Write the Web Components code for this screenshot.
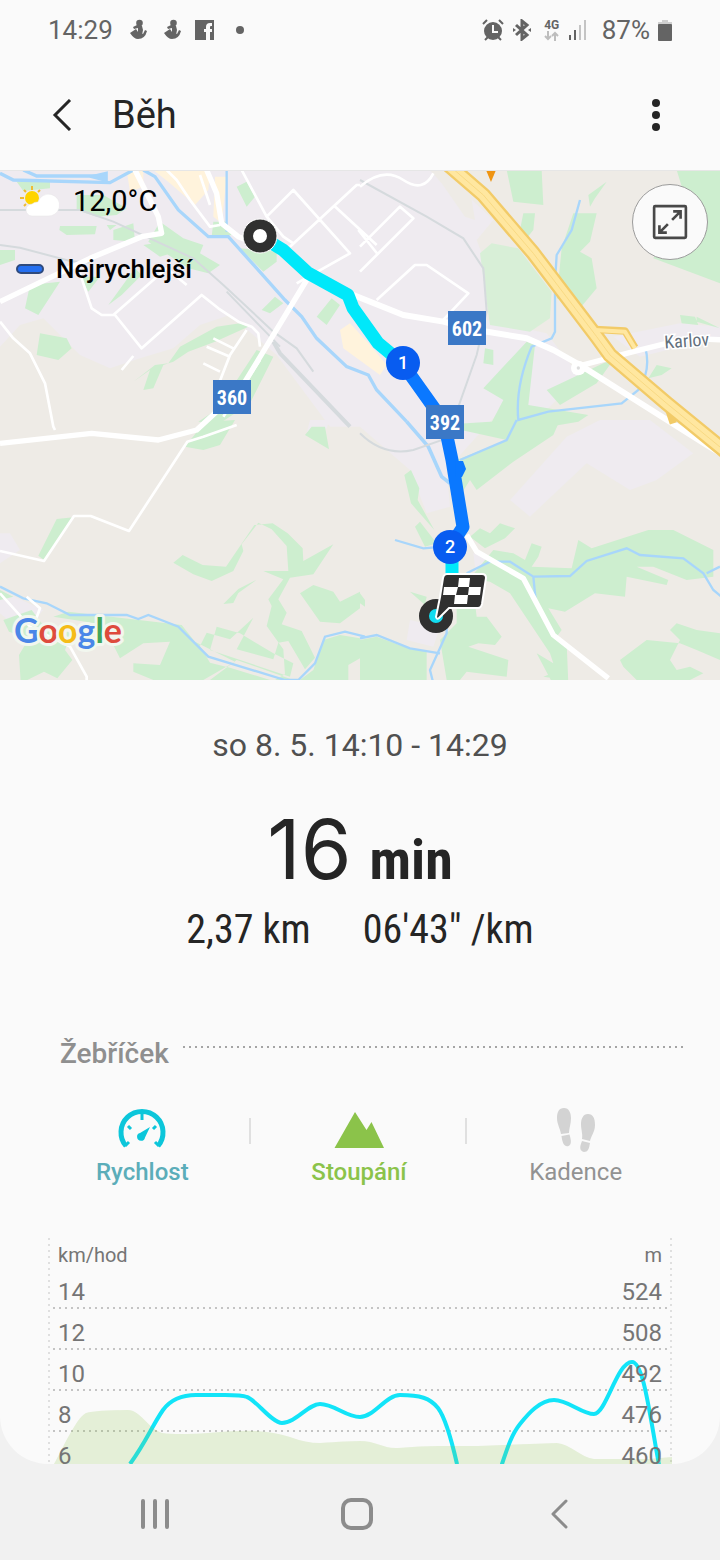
<!DOCTYPE html>
<html lang="cs">
<head>
<meta charset="utf-8">
<meta name="viewport" content="width=device-width, initial-scale=1">
<title>Běh</title>
<style>
  body { margin: 0; background: #f1f1f1; color: #252525; font-family: Roboto, "Noto Sans", sans-serif; }
</style>
</head>
<body>
<run-app></run-app>

<template id="run-app">
  <style>
    :host { display: flex; flex-direction: column; height: 100vh; }
    main { flex: 1; min-height: 0; overflow: hidden; background: #fafafa; border-radius: 0 0 48px 48px; }
  </style>
  <main>
    <status-bar></status-bar>
    <app-bar>Běh</app-bar>
    <route-map></route-map>
    <run-summary>
      <span slot="date">so 8. 5. 14:10 - 14:29</span>
      <span slot="value">16</span>
      <span slot="unit">min</span>
      <span slot="distance">2,37 km</span>
      <span slot="pace">06'43" /km</span>
    </run-summary>
    <section-heading>Žebříček</section-heading>
    <metric-tabs>
      <metric-tab style="--tone:#5badb9" strong>
        <svg slot="icon" width="52" height="48" viewBox="0 0 52 48">
          <g fill="none" stroke="#0cc6da" stroke-width="5">
            <path d="M10 40A21 21 0 1 1 42 40"/>
            <path d="M26 7v7M12 20l3 3M40 20l-3 3M9 40l4-4M43 40l-4-4" stroke-width="3"/>
          </g>
          <path d="M34 21L29 31.500A4 4 0 1 1 24 27Z" fill="#0cc6da"/>
        </svg>Rychlost
      </metric-tab>
      <metric-tab style="--tone:#8bc34a" strong>
        <svg slot="icon" width="52" height="48" viewBox="0 0 52 48"><path d="M1.500 42L22 6l11.500 18 5-8L51 42Z" fill="#8bc34a"/></svg>Stoupání
      </metric-tab>
      <metric-tab style="--tone:#929292">
        <svg slot="icon" width="52" height="48" viewBox="0 0 52 48" fill="#d3d3d3">
          <path d="M14 2c5 0 7 5 7 10 0 6-2 10-2 15l-8 1C10 22 7 18 7 12S9 2 14 2ZM11.500 30l8-1.500C21 34 22 38 18.500 40c-4 1-6-2-7-10Z"/>
          <path d="M38 8c-5 0-7 5-7 10 0 6 2 10 1 15l8 2c1-5 5-9 5-16S43 8 38 8ZM32 35l8 2c-1 6-2 9-6 9-4-1-5-4-2-11Z"/>
        </svg>Kadence
      </metric-tab>
    </metric-tabs>
    <speed-chart></speed-chart>
  </main>
  <nav-bar></nav-bar>
</template>

<template id="status-bar">
  <style>
    :host { display: flex; align-items: center; height: 60px; padding: 0 48px; color: #646464; font-size: 26px; line-height: 30px; }
    .left, .right { display: flex; align-items: center; }
    .left { flex: 1; gap: 14px; }
    .right { gap: 8px; }
    svg { display: block; fill: #646464; }
    .net { display: flex; flex-direction: column; align-items: center; font-size: 12px; font-weight: 700; line-height: 12px; margin: 0 0 0 4px; }
    .sig { margin-right: 6px; }
  </style>
  <div class="left">
    <span>14:29</span>
    <svg width="20" height="22" viewBox="-3 0 20 22"><circle cx="9.500" cy="4" r="3.300"/><path d="M3 8L9 5l3 2 1 4-1 5H8V9L4 10Z"/><path d="M0 14L6 10l2 3 5 2 2-4 2 1Q15 20 8 20 4 20 0 14Z"/></svg>
    <svg width="20" height="22" viewBox="-3 0 20 22"><circle cx="9.500" cy="4" r="3.300"/><path d="M3 8L9 5l3 2 1 4-1 5H8V9L4 10Z"/><path d="M0 14L6 10l2 3 5 2 2-4 2 1Q15 20 8 20 4 20 0 14Z"/></svg>
    <svg width="19" height="20" viewBox="0 0 19 20"><path fill-rule="evenodd" d="M0 0h19v20h-4v-8h2V9h-2V7q0-1 1-1h1V3h-2q-4 0-4 4v2H9v3h2v8H0Z"/></svg>
    <svg width="24" height="10" viewBox="0 0 24 10"><circle cx="12" cy="5" r="4"/></svg>
  </div>
  <div class="right">
    <svg width="22" height="22" viewBox="0 0 22 22"><circle cx="11" cy="12" r="9"/><path d="M1 5l4-4M21 5l-4-4M3 21l3-3M19 21l-3-3" stroke="#646464" stroke-width="2"/><path d="M11 6v7h5" fill="none" stroke="#fafafa" stroke-width="2"/></svg>
    <svg width="20" height="22" viewBox="0 0 20 22"><path d="M4 6l11 10-5 4V2l5 4L4 16" fill="none" stroke="#646464" stroke-width="3"/><path d="M1 9l3 2-3 2zM19 9l-3 2 3 2z"/></svg>
    <div class="net">4G<svg width="16" height="10" viewBox="0 0 16 10"><path d="M4 0v8M1 5l3 3 3-3M11 10V2M8 5l3-3 3 3" fill="none" stroke="#bdbdbd" stroke-width="2"/></svg></div>
    <svg class="sig" width="20" height="20" viewBox="0 0 20 20"><path d="M1 15h2v5H1zM6 10h2v10H6z"/><path d="M11 5h2v15h-2zM16 0h2v20h-2z" fill="#c4c4c4"/></svg>
    <span>87%</span>
    <svg width="14" height="21" viewBox="0 0 14 21"><path d="M4 0h6v2h4v4H0V2h4z" fill="#d0d0d0"/><rect y="4" width="14" height="17" rx="1"/></svg>
  </div>
</template>

<template id="app-bar">
  <style>
    :host { display: flex; align-items: center; height: 111px; padding: 0 48px 0 38px; box-sizing: border-box; border-bottom: 1px solid #e6e6e6; }
    button { width: 48px; height: 48px; padding: 0; border: 0; background: none; display: grid; place-items: center; }
    h1 { flex: 1; margin: 0 0 0 26px; font-size: 38px; line-height: 48px; font-weight: 400; }
    button:last-child { width: 32px; }
  </style>
  <button aria-label="Zpět"><svg width="22" height="32" viewBox="0 0 22 32"><path d="M19 1L4 16l15 15" fill="none" stroke="#252525" stroke-width="3"/></svg></button>
  <h1><slot></slot></h1>
  <button aria-label="Další možnosti"><svg width="8" height="32" viewBox="0 0 8 32" fill="#252525"><circle cx="4" cy="4" r="4"/><circle cx="4" cy="16" r="4"/><circle cx="4" cy="28" r="4"/></svg></button>
</template>

<template id="route-map">
  <style>
    :host { display: block; position: relative; color: #000; }
    .map { display: block; width: 100%; height: auto; background: #eeebe6; }
    .info { position: absolute; top: 12px; left: 16px; display: flex; flex-direction: column; gap: 32px; }
    .row { display: flex; align-items: center; height: 36px; }
    .temp { font-size: 29px; gap: 14px; }
    .fast { font-size: 26px; font-weight: 500; gap: 12px; }
    .fast i { width: 24px; height: 6px; border: 2px solid #2f4a7d; border-radius: 6px; background: #256ff0; }
    button { position: absolute; top: 13px; right: 12px; width: 76px; height: 76px; padding: 0; border: 1px solid #9b9b9b; border-radius: 50%; background: #fafafa; display: grid; place-items: center; }
    text { font-family: "Roboto Condensed", Roboto, sans-serif; text-anchor: middle; }
  </style>
  <svg class="map" viewBox="0 1 720 509" role="img" aria-label="Mapa trasy">
    <!-- terrain is surveyed at three units per map pixel, in four sheets -->
    <g transform="scale(.33333)">
      <g fill="#efebf0">
        <path d="M0 0H1320L1480 150 1430 210 1460 290V450L1640 490 1740 620 1640 720 1520 700 1340 900 1350 1010 1280 1030 1230 900 1080 770H990L830 555 690 435 600 465 520 535 420 565 330 595 240 555 130 445 60 465 0 530Z"/>
        <path d="M1530 990L1700 800 1800 750H1950L2080 850 1970 930 1890 960 1760 880 1590 1040Z"/>
        <path d="M0 1090l30 0 30 50-60 40ZM0 1260l130 60-60 70-70-60ZM930 750h60l-10 25-60 15ZM1230 1350l90 20-20 60-80-20Z"/>
        <path d="M1840 500l200-40 120 10v30l-240 60ZM1420 1150l90 20-80 60Z"/>
      </g>
      <g fill="#cdeecf">
        <g transform="translate(0 -15)">
          <path d="M50 50l100 0v20l-80 8ZM180 183h110l-5 25-85 2-22-15ZM230 90h80l70 40-30 20-60 5-60-20ZM340 195l60-20 5 55-65-5ZM0 255h45v30l-45 15ZM480 170l70 50 60 20-10 25 60 35-35 25-60-15-120-80ZM320 180h30l-20 15ZM430 240l60-10 40 30-50 15ZM90 360l90-10-65 100-40-20ZM120 505l80 15 15 30-40 35-65-15ZM325 420l80-110 20 20-60 60ZM400 650l65-50 40-5 35-50 110-60 70-10 25 10-100 45-80 30-45 30-30 10-30 70-30 5 20-60ZM710 65l30-15 25 45-25 30ZM640 170h40l15 40-60 5ZM720 250l110 10v30l-40 30ZM785 435l40-40 25 20-40 30ZM950 455l45-55 25 20-40 60ZM770 555l50 20-70 140-90 60-65-5 60-40ZM240 335h60l-35 45Z"/>
        </g>
        <g transform="translate(1080 -15)">
          <path d="M440 15h105l5 105-90-10ZM685 90l55-40-35 50-15 25ZM490 145h35l-5 50-20 25-20-25ZM950 15h130v340l-200-75 90-200ZM640 145h70l-20 85-30 30 35 20 15 90-50 60-70-30 15-150ZM960 450l45 5 10 25-50-5ZM1010 455l70 35-70-20ZM375 550l25 5 0 45-30-5ZM500 530l25 10-20 180 180 30-30 20-235 40-40-10 50-95-60-35ZM560 675l170-80 30-10-50 70-110 65ZM865 640l25-40 45 10-30 20Z"/>
          <path d="M360 265l35-30 80 15 100 130-5 80-60 40-120-20Z" fill="#d8efd7"/>
        </g>
        <g transform="translate(0 750)">
          <path d="M170 297l50-5-85 130-20-15ZM555 80l60-75 90-5-45 75-50 15ZM915 45l20-25h40l12 68ZM548 405l60 30 70 5 85-125 55-5 45 30 45 45 2 38 90-50-60 90-70 10-35 65 25 40-15 35 60 20 40 80-30 35-50-85-30 5-15 50-110-30 50-95-70 65-70-20-20 40 30 50 60 15 130 40 35-20-5-75-50-70 15-60-10-20 45-60-60-25h75l-5-75-45-50-40-20-50 65 5 20-30 60-65 30-55-20-60-35ZM670 552l45-45 55-28-55 40-15 30ZM900 520l40-25 60 20 20 30 60-30v50l-60 45-60-5ZM0 510l40 20-40 10ZM10 600l85-30 30 40 90 30-20 50 22 30-45 55-40-20-60 30h-10l-5-80 30-50-60-20ZM160 590l45-15 340 40 40 50 120 60-95 55h-150l-60-25v-25l80 5 30-70-80 5-70 45-20-40-20-60ZM630 780l80-60 170 60ZM650 620l70 20 100 60 60 30-10 40-240-80ZM900 780l40-30 30-90 50-15 60 10v60l-35 20v65Z"/>
        </g>
        <g transform="translate(1080 750)">
          <path d="M235 15L480 0h120l-20 45-120 80-110 85-20-30-25 40-15-100 150-60ZM133 165l20-15 25 55-5 35 50 90-70-80ZM180 305l50 65-35 10-30-60ZM330 350l30-25 30 15 30-30 45 15-30 30-60 30ZM400 390l60 10 35 20 20-50 30 10-10 30-20 30 120 5 20-85 40 25 170-55 75 0 120 60v80l-80 10-100-40h-50l95 40-5 15-120-25-5 60-90-10-90 55-50-10 40 65-15 20 30 20 5 120-50-5-45-85 50 30-10-30-120-180-60-35-60-10ZM290 560l55-10 5 40 30 0 45 60-20 25-50-5-30 10 120 40-5 50-120-15-20 25h-40l-20-120 50-50ZM150 515l50 15-5 25ZM0 660l50-10 110 40 40 0v90H0ZM780 720l80-60 100 10 50 20 70 30v-80l-70-10-60-20-20 20 30 30-30 60 20 30 40-10 40 20-70 35-110 5-60-60ZM0 520l15 20v20l-15-10ZM550 770l50-20 20 30Z"/>
        </g>
      </g>
      <g fill="#fff3dc">
        <path d="M380 0h50v50l-40 15ZM460 0h170l-5 60-40 45-75-65ZM645 20h35l-15 140-25-20ZM1020 480l30-20 60 65 50 60-20 30-110-80Z"/>
      </g>
      <path d="M1290 0h60l60 60 15 90-30-10-70-100Z" fill="#eeebe6"/>

      <g fill="none" stroke="#a8d6fb" stroke-width="7">
        <path d="M0 10l40 20 290 8 70-38M70 0l40 18 190 0M430 0l35 20 70 100 90 80h60l170 190 50 50L950 505 1040 590 1105 615 1130 660 1220 755" stroke-width="10"/>
        <path d="M270 20l50-12v25Z" fill="#a8d6fb"/>
        <path d="M680 0v185M1740 90l-25 90-45 75-5 80v150l-10 20-60 25q-50 120-40 220l90-25 220-25 50-40q40-60 20-130"/>
        <path d="M1220 755l65 75 40 90 25 20" stroke-width="11"/><path d="M1380 870l140-60 30-60M1185 1110l85 25 120-10M1400 1210l70-35 60 0 70 45 110-2 50-45 120-38 40 20 130 10 60 45 30 50 60 50M1600 1220l8 80M1080 1405l50-10 100 40 90 15M1340 1330l0 60-50 110 10 40M0 1250l70 35 70 15 70 35h170l35 12 30-12 90 35 90 90 230 70h40l50-50 30-80 60-15 60 15M2120 1210l40-20"/>
      </g>
      <g fill="none" stroke="#d5dadd" stroke-width="6">
        <path d="M0 120h240l100 35 240 110 90 80 150 140 70 50 50 70M0 225l60 8 150 40 60 5"/>
        <path d="M820 515l20 35 210 220" stroke-width="12"/><path d="M680 365l160 165"/>
        <path d="M1080 30l200 110 110 65 60 90 10 130-30 130-60 170M1080 790q70 70 160 50l100-35"/>
      </g>
      <g fill="none" stroke="#fff" stroke-width="8" stroke-linejoin="round">
        <path d="M240 310l35 105 30 20 40 0 80 100 180-160 50 40 60 40 40 15 20 20 5 40M340 435l160-140 60 50M0 455l40 50 50 45 45 90 25 130 5 10M365 600l35-42M640 505l60 30M620 530l70 30M610 580l50 25M740 480l-50 75-35 90M500 0l30 30 40 60 60 80 30-5M725 0l75 140 50 60 30 20M800 140l80-80 170 190-160 90M870 230l200-185 10 0M1000 105l130 120M1080 230l120-120 40 35-160 160M1075 180l60 75M1130 390l115-105h35l125 85-80 85M600 15l30 90"/>
        <path d="M710 765l-100 35-48 15-175 268-115-45h-50l-90 135L0 1143M80 1280l40 35-15 40M0 1270l90 100 120 60 50 90v20M670 740l110-170"/>
        <path d="M1080 50q70-60 130-20t90-20" />
      </g>
      <g fill="none" stroke="#fff" stroke-width="18" stroke-linejoin="round">
        <path d="M0 395l270-130 155-65 60-10-10-50-70-140M620 0l30 70 15 90 50 40 50 20M920 330L720 660l-130 120-115 30-200-20L0 820" stroke-width="16"/>
        <path d="M1060 375l150 60 120 20 100 25 150 25 80 35 80 45 380 240 100 60"/>
        <path d="M1730 590l170-45 160-40 120 5M1400 1095l30 50 140 80 90 170 165 130" stroke-width="16"/>
      </g>
      <circle cx="1735" cy="594" r="22" fill="#fff"/><circle cx="1735" cy="594" r="5" fill="#ddd"/>
      <g fill="none" stroke-linejoin="round">
        <g stroke="#f2cb68"><path d="M1340-20L1450 75 1600 250 1790 500 1830 555 2000 700 2220 880" stroke-width="46"/>
          <path d="M1785 478l90 5 30 50M1490 130q20-10 45 45M2000 700l20 60M1380 0l30 30" stroke-width="22"/></g>
        <g stroke="#ffe7a0"><path d="M1340-20L1450 75 1600 250 1790 500 1830 555 2000 700 2220 880" stroke-width="32"/>
          <path d="M1785 480l90 5 30 50" stroke-width="12"/></g>
        <path d="M1340-20L1450 75 1600 250 1790 500 1830 555 2000 700 2220 880" stroke="#f8d984" stroke-width="3"/>
      </g>
      <path d="M1458 0h30l-15 36Z" fill="#ef9411"/>
    </g>

    <g fill="none" stroke-linejoin="round" stroke-width="13">
      <path d="M260 66L283 80 308 103 348 125 353 138 378 173 402 193M452 377v30" stroke="#00e8fa"/>
      <path d="M402 193L444 252 452 290 463 357 450 377" stroke="#0a78ff"/>
      <path d="M455 291h8l3 8-4 8h-6Z" fill="#0a78ff" stroke="none"/>
    </g>
    <circle cx="260" cy="66" r="12" fill="#fff" stroke="#303030" stroke-width="10"/>
    <circle cx="260" cy="66" r="17" fill="none" stroke="#fff"/>
    <circle cx="436" cy="446" r="12" fill="#12dcf0" stroke="#303030" stroke-width="10"/>
    <path d="M443 408q1-4 4-4h35q4 0 4 4l-4 26q-1 4-4 4H449L439 448q-2 2-3-1l4-20Z" fill="#303030" stroke="#fff" stroke-width="2"/>
    <path d="M459 408h11l-1 9h12l-1 8h-12l-1 9h-13l1-9h-12l1-8h14ZM458 417l-2 8h12l1-8Z" fill="#fff" fill-rule="evenodd"/>
    <g fill="#3b78c6"><path d="M213 210h38v34h-38zM448 141h38v34h-38zM426 235h38v34h-38z"/></g>
    <g fill="#085cf0"><circle cx="403" cy="193" r="17"/><circle cx="450" cy="377" r="17"/></g>
    <g fill="#fff" font-size="20" font-weight="700">
      <text x="232" y="235">360</text><text x="467" y="166">602</text><text x="445" y="260">392</text>
    </g>
    <g fill="#fff" font-size="18" font-weight="500">
      <text x="403" y="199" style="font-family:Roboto,sans-serif">1</text><text x="450" y="383" style="font-family:Roboto,sans-serif">2</text>
    </g>
    <text x="687" y="177" transform="rotate(-4 687 176)" font-size="18" fill="#64707c" stroke="#fff" stroke-width="3" paint-order="stroke">Karlov</text>
    <text x="68" y="473" style="font-family:Lato,sans-serif" font-size="34" font-weight="700" stroke="#f2f7ef" stroke-width="6" stroke-linejoin="round" paint-order="stroke"><tspan fill="#4a86e8">G</tspan><tspan fill="#de4b3d">o</tspan><tspan fill="#f5bc18">o</tspan><tspan fill="#4a86e8">g</tspan><tspan fill="#43a55b">l</tspan><tspan fill="#de4b3d">e</tspan></text>
  </svg>
  <div class="info">
    <div class="row temp">
      <svg width="43" height="32" viewBox="0 0 43 32"><circle cx="16" cy="13" r="7" fill="#ffd400"/><path d="M16 1v4M4 13h4M8 5l2 2M24 5l-2 2M8 21l2-2" stroke="#eebb35" stroke-width="2"/><path d="M16 31a6 6 0 0 1 0-12 8 8 0 0 1 6-2 11 11 0 1 1 9 14Z" fill="#fff" stroke="#e7e5e7" stroke-width=".5"/></svg>
      <span>12,0°C</span>
    </div>
    <div class="row fast"><i></i><span>Nejrychlejší</span></div>
  </div>
  <button aria-label="Zvětšit mapu"><svg width="36" height="36" viewBox="0 0 34 34" fill="none" stroke="#484848" stroke-width="2.500"><rect x="2" y="2" width="30" height="30" rx="1"/><path d="M19 15l8-8M20 7h7v7M15 19l-8 8M7 20v7h7"/></svg></button>
</template>

<template id="run-summary">
  <style>
    :host { display: flex; flex-direction: column; align-items: center; padding-top: 44px; }
    .date { font-size: 32px; line-height: 42px; color: #505050; }
    .time { display: flex; align-items: baseline; gap: 18px; margin-top: 38px; line-height: 92px; }
    .value { font-family: Inter, sans-serif; font-size: 82px; font-weight: 400; }
    .unit { font-family: "Roboto Condensed", Roboto, sans-serif; font-size: 56px; font-weight: 700; }
    .stats { display: flex; gap: 52px; font-family: "Roboto Condensed", Roboto, sans-serif; font-size: 40px; line-height: 48px; }
  </style>
  <div class="date"><slot name="date"></slot></div>
  <div class="time"><span class="value"><slot name="value"></slot></span><span class="unit"><slot name="unit"></slot></span></div>
  <div class="stats"><slot name="distance"></slot><slot name="pace"></slot></div>
</template>

<template id="section-heading">
  <style>
    :host { display: flex; gap: 14px; padding: 0 36px 0 60px; margin-top: 84px; }
    h2 { margin: 0; font-size: 28px; line-height: 32px; font-weight: 500; color: #8f8f8f; }
    i { flex: 1; height: 2px; margin-top: 8px; background: repeating-linear-gradient(90deg, #a4a4a4 0 2px, transparent 2px 6px); }
  </style>
  <h2><slot></slot></h2><i></i>
</template>

<template id="metric-tabs">
  <style>
    :host { display: grid; grid-template-columns: repeat(3, 1fr); margin-top: 36px; padding: 0 36px 0 34px; }
  </style>
  <slot></slot>
</template>

<template id="metric-tab">
  <style>
    :host { display: block; background: linear-gradient(#e0e0e0, #e0e0e0) right 12px / 2px 26px no-repeat; }
    :host(:last-child) { background: none; }
    button { display: flex; flex-direction: column; align-items: center; gap: 4px; width: 100%; padding: 0; border: 0; background: none; color: var(--tone); font: 400 24px/28px Roboto, sans-serif; }
    :host([strong]) button { font-weight: 500; }
    ::slotted(svg) { display: block; }
  </style>
  <button><slot name="icon"></slot><span><slot></slot></span></button>
</template>

<template id="speed-chart">
  <style>
    :host { display: block; position: relative; height: 260px; margin: 52px 48px 0; color: #757575; font-size: 24px; }
    .plot { position: absolute; inset: 0; width: 100%; height: 260px; }
    .plot path { vector-effect: non-scaling-stroke; }
    .labels { position: relative; display: flex; flex-direction: column; padding: 0 10px; }
    .labels div { display: flex; justify-content: space-between; line-height: 41px; }
    .labels .units { font-size: 20px; line-height: 34px; }
  </style>
  <svg class="plot" viewBox="0 0 624 260" preserveAspectRatio="none" fill="none" aria-hidden="true">
    <path d="M1 0V260M623 0V260" stroke="#c4c4c4" stroke-width="1" stroke-dasharray="2 4"/>
    <path d="M5 70H620M5 111H620M5 152H620M5 193H620" stroke="#c4c4c4" stroke-width="2" stroke-dasharray="2 4"/>
    <path d="M130 226C146 204 152 188 163 172Q174 157 196 157H225Q242 157 247 159C256 162 272 185 282 185C296 185 308 166 320 166C334 166 346 179 360 179C374 179 386 157 400 157C420 157 430 160 438 170Q447 182 457 226L468 260H492L502 226C508 208 512 196 520 186S540 162 554 162S582 176 594 176C606 176 617 124 632 124C644 124 650 180 660 232" transform="translate(-48)" stroke="#12e4f8" stroke-width="4"/>
    <path d="M6 226C14 212 28 180 38 175Q48 172 80 172C92 172 101 191 114 195Q130 197 160 195Q194 192 208 193Q226 194 242 199Q258 205 272 205Q300 203 312 203C328 203 336 211 350 210Q372 208 390 208H430L509 205C522 206 534 220 546 221H600L624 219V260H6Z" fill="#8bc34a" fill-opacity=".2"/>
  </svg>
  <div class="labels">
    <div class="units"><span>km/hod</span><span>m</span></div>
    <div><span>14</span><span>524</span></div>
    <div><span>12</span><span>508</span></div>
    <div><span>10</span><span>492</span></div>
    <div><span>8</span><span>476</span></div>
    <div><span>6</span><span>460</span></div>
  </div>
</template>

<template id="nav-bar">
  <style>
    :host { display: flex; justify-content: center; align-items: center; gap: 152px; height: 96px; box-sizing: border-box; padding: 4px 6px 0 0; }
    button { width: 50px; height: 50px; padding: 0; border: 0; background: none; display: grid; place-items: center; }
    svg { fill: none; stroke: #8c8c8c; stroke-width: 4; stroke-linecap: round; stroke-linejoin: round; }
  </style>
  <button aria-label="Poslední aplikace"><svg width="32" height="32" viewBox="0 0 32 32"><path d="M4 3v26M16 3v26M28 3v26"/></svg></button>
  <button aria-label="Domů"><svg width="34" height="34" viewBox="0 0 34 34"><rect x="3" y="3" width="28" height="28" rx="8"/></svg></button>
  <button aria-label="Zpět"><svg width="20" height="32" viewBox="0 0 20 32"><path d="M17 3L4 16l13 13" stroke-width="3"/></svg></button>
</template>

<script>
  // Each component clones the template that carries its own tag name.
  class TemplateElement extends HTMLElement {
    constructor() {
      super();
      const template = document.getElementById(this.localName);
      this.attachShadow({ mode: "open" }).append(template.content.cloneNode(true));
    }
  }
  for (const name of ["status-bar", "app-bar", "route-map", "run-summary", "section-heading",
                      "metric-tab", "metric-tabs", "speed-chart", "nav-bar", "run-app"]) {
    customElements.define(name, class extends TemplateElement {});
  }
</script>
</body>
</html>
